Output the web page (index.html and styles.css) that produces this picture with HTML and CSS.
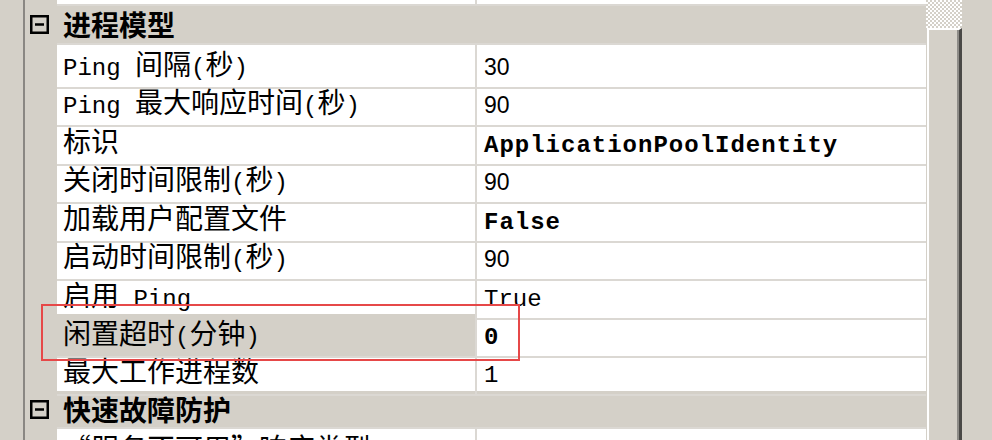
FILE: index.html
```html
<!DOCTYPE html>
<html lang="zh-CN">
<head>
<meta charset="utf-8">
<title>高级设置</title>
<link rel="stylesheet" href="styles.css">
</head>
<body>
<div class="frame">
  <div class="side"></div>
  <div class="grid">
    <div class="rows">
      <div class="row"><div class="gut"></div><div class="name"></div><div class="val"></div></div>
      <div class="row cat">
        <div class="gut"><svg class="tog" width="19" height="19" viewBox="0 0 19 19"><rect x="1.25" y="1.25" width="16.5" height="16.5" fill="none" stroke="#000" stroke-width="2.5"/><path d="M5 9.5h9" stroke="#000" stroke-width="2.5"/></svg></div>
        <div class="cat-name">进程模型</div>
      </div>
      <div class="row"><div class="gut"></div><div class="name"><span class="lat">Ping </span>间隔<span class="lat">(</span>秒<span class="lat">)</span></div><div class="val"><span class="num">30</span></div></div>
      <div class="row"><div class="gut"></div><div class="name"><span class="lat">Ping </span>最大响应时间<span class="lat">(</span>秒<span class="lat">)</span></div><div class="val"><span class="num">90</span></div></div>
      <div class="row"><div class="gut"></div><div class="name">标识</div><div class="val"><span class="bold">ApplicationPoolIdentity</span></div></div>
      <div class="row"><div class="gut"></div><div class="name">关闭时间限制<span class="lat">(</span>秒<span class="lat">)</span></div><div class="val"><span class="num">90</span></div></div>
      <div class="row"><div class="gut"></div><div class="name">加载用户配置文件</div><div class="val"><span class="bold">False</span></div></div>
      <div class="row"><div class="gut"></div><div class="name">启动时间限制<span class="lat">(</span>秒<span class="lat">)</span></div><div class="val"><span class="num">90</span></div></div>
      <div class="row"><div class="gut"></div><div class="name">启用<span class="lat"> Ping</span></div><div class="val"><span class="lat">True</span></div></div>
      <div class="row sel"><div class="gut"></div><div class="name">闲置超时<span class="lat">(</span>分钟<span class="lat">)</span></div><div class="val"><span class="bold">0</span></div></div>
      <div class="row"><div class="gut"></div><div class="name">最大工作进程数</div><div class="val"><span class="lat">1</span></div></div>
      <div class="row cat">
        <div class="gut"><svg class="tog" width="19" height="19" viewBox="0 0 19 19"><rect x="1.25" y="1.25" width="16.5" height="16.5" fill="none" stroke="#000" stroke-width="2.5"/><path d="M5 9.5h9" stroke="#000" stroke-width="2.5"/></svg></div>
        <div class="cat-name">快速故障防护</div>
      </div>
      <div class="row"><div class="gut"></div><div class="name"><span class="fw">“</span>服务不可用<span class="fw">”</span>响应类型</div><div class="val"><span class="lat">HttpLevel</span></div></div>
    </div>
    <div class="mark"></div>
  </div>
  <div class="scroll"><div class="track"></div><div class="thumb"></div></div>
  <div class="rest"></div>
</div>
</body>
</html>
```

FILE: styles.css
```css
html, body {
  margin: 0;
  padding: 0;
}

body {
  background: #d4d0c8;
  font-family: "Noto Sans CJK SC", sans-serif;
  color: #000;
}

.frame {
  display: flex;
  width: 992px;
  height: 440px;
  overflow: hidden;
}

.side {
  flex: none;
  width: 23px;
  border-right: 2px solid #8a8783;
}

.grid {
  position: relative;
  flex: none;
  width: 901px;
  overflow: hidden;
  background: #fff;
}

.rows {
  margin-top: -32px;
}

.row {
  display: grid;
  grid-template-columns: 32px 420px 1fr;
  height: 38.45px;
}

.gut {
  display: flex;
  align-items: center;
  padding-left: 5px;
  background: #d4d0c8;
}

.tog {
  display: block;
  margin-top: -2px;
}

.name,
.val,
.cat-name {
  box-sizing: border-box;
  border-bottom: 2px solid #dbd8d3;
  font-size: 28px;
  line-height: 36px;
  white-space: pre;
}

.name {
  border-right: 2px solid #dbd8d3;
  padding-left: 6px;
}

.val {
  padding-left: 7px;
}

.cat {
  background: #d4d0c8;
}

.cat-name {
  grid-column: 2 / 4;
  padding-left: 6px;
  font-weight: 700;
}

.sel .name {
  background: #d4d0c8;
}

.lat {
  font-family: "Liberation Mono", monospace;
  font-size: 24px;
}

.bold {
  font-family: "Liberation Mono", monospace;
  font-size: 24px;
  font-weight: 700;
  letter-spacing: 1px;
}

.num {
  font-family: "Liberation Sans", sans-serif;
  font-size: 23px;
}

.fw {
  font-feature-settings: "fwid";
}

.mark {
  position: absolute;
  left: 16px;
  top: 304px;
  width: 479px;
  height: 57px;
  box-sizing: border-box;
  border: 2px solid #e64848;
}

.scroll {
  flex: none;
  width: 36px;
  display: flex;
  flex-direction: column;
}

.track {
  height: 28px;
  background: repeating-conic-gradient(#ffffff 0 25%, #d4d0c8 0 50%) 0 0 / 4px 4px;
}

.thumb {
  flex: 1;
  margin-left: 1px;
  background: #d4d0c8;
  border-top: 2px solid #ffffff;
  border-left: 2px solid #ffffff;
  border-right: 3px solid #4a4947;
  box-shadow: inset -2px 0 #8e8c88;
}

.rest {
  flex: 1;
}
```
